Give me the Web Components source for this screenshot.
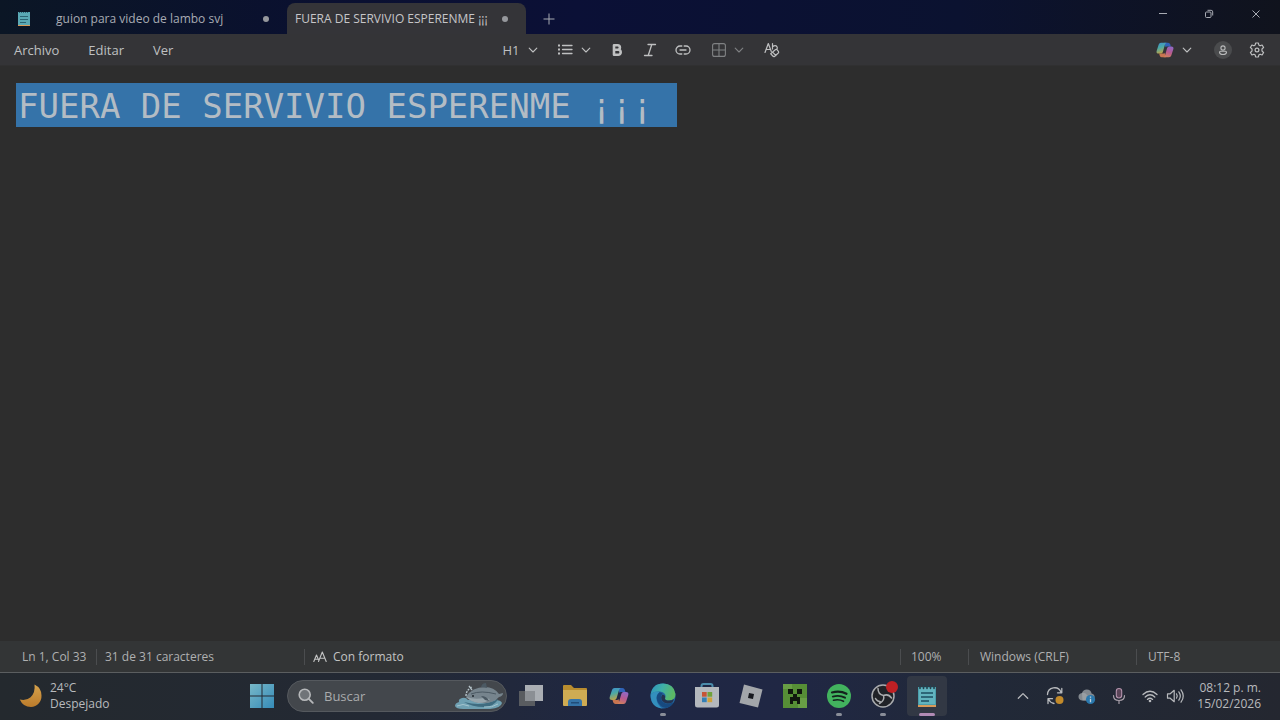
<!DOCTYPE html>
<html lang="es">
<head>
<meta charset="utf-8">
<meta name="viewport" content="width=device-width, initial-scale=1">
<title>FUERA DE SERVIVIO ESPERENME ¡¡¡</title>
<style>
  html, body { height: 100%; }
  body {
    margin: 0;
    font-family: "Open Sans", "Noto Sans", sans-serif;
    font-size: 12px;
    color: #b9babb;
    background: #2d2d2d;
    --strong: #bfc0c1;
    --muted: #7f8183;
  }
</style>
</head>
<body>
<desktop-screen></desktop-screen>
<script>
const ICONS = {
  notes: ['0 0 20 24', `<path fill="#4b9fac" d="M1 3h18v18H1z"/><path fill="#62b4bf" d="M2 4h16v16H2z"/><path fill="#d99a58" d="M1 21h18v2H1z"/><path stroke="#1d4e62" stroke-width="1.5" d="M4 9h12M4 13h12M4 17h8"/><path stroke="#24404d" stroke-width="1.6" stroke-linecap="round" d="M3 1.5v3M6.5 1.5v3M10 1.5v3M13.500 1.5v3M17 1.5v3"/>`],
  notesSmall: ['0 0 14 16', `<path fill="#5aa9b5" d="M1 1h12v13H1z"/><path fill="#d99a58" d="M1 14h12v1H1z"/><path stroke="#2c6472" d="M3 5.500h8M3 8.500h8M3 11.500h6"/><path stroke="#2c6472" stroke-dasharray="1 1" d="M2 1.500h10"/>`],
  plus: ['0 0 12 12', `<path stroke="currentColor" d="M6 .5v11M.5 6h11"/>`],
  min: ['0 0 10 10', `<path stroke="currentColor" d="M1 4.500h8"/>`],
  restore: ['0 0 10 10', `<rect x="1.500" y="3" width="5.500" height="5.500" rx="1" fill="none" stroke="currentColor"/><path fill="none" stroke="currentColor" d="M3.500 1.300h3.600q1.600 0 1.600 1.600v3.600"/>`],
  close: ['0 0 10 10', `<path stroke="currentColor" d="M1.500 1.500l7 7M8.500 1.500l-7 7"/>`],
  chev: ['0 0 10 10', `<path fill="none" stroke="currentColor" stroke-width="1.100" stroke-linecap="round" stroke-linejoin="round" d="M1.200 3.200L5 7l3.800-3.800"/>`],
  up: ['0 0 12 12', `<path fill="none" stroke="currentColor" stroke-width="1.300" stroke-linecap="round" stroke-linejoin="round" d="M1.300 8.300L6 3.600l4.700 4.700"/>`],
  list: ['0 0 16 16', `<path stroke="currentColor" stroke-width="1.300" stroke-linecap="round" d="M5.500 3.500h9.500M5.500 7.500h9.500M5.500 11.500h9.500"/><path fill="currentColor" d="M1 2.500h2v2H1zM1 6.500h2v2H1zM1 10.500h2v2H1z"/>`],
  bold: ['0 0 12 14', `<path fill="none" stroke="currentColor" stroke-width="2.600" stroke-linejoin="round" d="M3 2.200h3.600a2.300 2.300 0 0 1 0 4.600H3zM3 6.800h4.200a2.500 2.500 0 0 1 0 5H3z"/>`],
  italic: ['0 0 14 14', `<path fill="none" stroke="currentColor" stroke-width="1.300" stroke-linecap="round" d="M5 1.500h7.500M1.500 12.500H9M8.800 1.500l-3.600 11"/>`],
  link: ['0 0 16 12', `<path fill="none" stroke="currentColor" stroke-width="1.300" stroke-linecap="round" d="M6.800 2H5a4 4 0 0 0 0 8h1.800M9.200 2H11a4 4 0 0 1 0 8H9.200M5 6h6"/>`],
  table: ['0 0 14 14', `<rect x=".6" y=".6" width="12.800" height="12.800" rx="2" fill="none" stroke="currentColor" stroke-width="1.100"/><path stroke="currentColor" stroke-width="1.100" d="M7 1v12M1 7h12"/>`],
  clear: ['0 0 16 16', `<path fill="none" stroke="currentColor" stroke-width="1.200" stroke-linecap="round" stroke-linejoin="round" d="M1 10.500L4.300 1.500l3 8M2.200 7.500h4M8.500 1.500v5.500M8.500 4.800q3-2.200 4.500 0q.7 1.200 0 2.200M6.700 11.800l4.600-4q1-.8 1.900.1l1.200 1.400q.7.900-.1 1.700l-3.600 3.200q-1 .8-1.900-.2l-2-2.200M8.600 10.100l3.300 3.500"/>`],
  person: ['0 0 18 18', `<circle cx="9" cy="9" r="9" fill="#4a4b4d"/><circle cx="9" cy="7" r="2.100" fill="none" stroke="#b9babb" stroke-width="1.100"/><path fill="none" stroke="#b9babb" stroke-width="1.100" d="M6.500 10.300h5q1 0 1 1q-.4 2.200-3.500 2.200t-3.500-2.200q0-1 1-1z"/>`],
  gear: ['0 0 16 16', `<path fill="none" stroke="currentColor" stroke-width="1.200" stroke-linejoin="round" d="M6.600 1h2.800l.4 2 1.300.8 2-.8 1.500 2.500-1.600 1.400v2.200l1.600 1.400-1.500 2.500-2-.8-1.300.8-.4 2H6.600l-.4-2-1.300-.8-2 .8-1.500-2.500L3 9.100V6.900L1.400 5.500 2.900 3l2 .8L6.200 3z"/><circle cx="8" cy="8" r="1.900" fill="none" stroke="currentColor" stroke-width="1.200"/>`],
  copilot: ['0 0 20 20', `<defs><linearGradient id="a" x1="0" y1="0" x2=".3" y2="1"><stop offset="0" stop-color="#3d8fd0"/><stop offset=".5" stop-color="#4ba9a5"/><stop offset="1" stop-color="#b9a34c"/></linearGradient><linearGradient id="b" x1=".6" y1="0" x2=".3" y2="1"><stop offset="0" stop-color="#9068c4"/><stop offset=".5" stop-color="#b65a92"/><stop offset="1" stop-color="#d07f5c"/></linearGradient></defs><path fill="#2f62b8" d="M9 2h4.500q1.700 0 2.300 1.700L16.500 6H12q-1 0-1.400 1z"/><path fill="#c87550" d="M11 18H6.500q-1.700 0-2.300-1.700L3.500 14H8q1 0 1.400-1z"/><path fill="url(#a)" d="M5.500 2h6.300Q10.500 2.400 10 4L7.600 12.300Q7.100 14 5.400 14H3Q0 14 .7 11L3 4Q3.600 2 5.500 2z"/><path fill="url(#b)" d="M14.500 18H8.200q1.300-.4 1.800-2l2.400-8.300Q12.900 6 14.600 6H17q3 0 2.300 3L17 16q-.6 2-2.500 2z"/>`],
  format: ['0 0 14 12', `<path fill="none" stroke="currentColor" stroke-width="1.100" stroke-linecap="round" stroke-linejoin="round" d="M.8 10.500L3.500 4l2 4.800M1.800 8.300h3M5.500 10.500L9.300 1l3.900 9.500M6.800 7.300h5"/>`],
  moon: ['0 0 24 24', `<defs><linearGradient id="m" x1="0" y1="0" x2="0" y2="1"><stop offset="0" stop-color="#d6a24c"/><stop offset="1" stop-color="#bb7b2b"/></linearGradient></defs><path fill="url(#m)" d="M15.500.5q7 3.500 7 11A11 11 0 0 1 12 23Q4 23 .8 15.500q6.500 1.500 10.800-2.300Q16.500 8.500 15.500.5z"/>`],
  start: ['0 0 24 24', `<defs><linearGradient id="s" x1="0" y1="0" x2="1" y2="1"><stop offset="0" stop-color="#78b8c8"/><stop offset="1" stop-color="#358bb8"/></linearGradient></defs><path fill="url(#s)" d="M0 0h11.500v11.500H0zM12.500 0H24v11.500H12.500zM0 12.500h11.500V24H0zM12.500 12.500H24V24H12.500z"/>`],
  search: ['0 0 16 16', `<circle cx="6.700" cy="6.700" r="5.500" fill="#707478" stroke="#b6b8ba" stroke-width="1.600"/><path stroke="#b6b8ba" stroke-width="1.900" stroke-linecap="round" d="M10.800 10.800l4 4"/>`],
  whale: ['0 0 50 28', `<path fill="#6fa0b2" d="M1 24q0-3 4-4-1-3 3-4 4-1 6 2 8-3 15 1 7-6 13-4 2 2-1 3 6 0 7 3-1 5-12 6H9q-7 0-8-3z"/><path fill="#3f6c80" d="M10 20q8 2 14 2 10 0 20-5-3 7-14 8-12 0-20-5z"/><path fill="#76848d" d="M12 15Q18 5 31 5q9 0 14 7l4-1q0 3-4 4-6 7-18 6-8 0-15-6z"/><path fill="#98a6ad" d="M12 15q9 3 18 1l6 1q-4 4-11 4-8-1-13-6z"/><path fill="#4b5963" d="M27 5q1-4 5-4l1 5zM27 14q6 0 8 5l-4-1z"/><path fill="none" stroke="#4b5963" d="M17 12q10-4 25 0"/><circle cx="19" cy="14" r="1" fill="#20282f"/><path fill="none" stroke="#b4c2c8" stroke-width="1.400" stroke-dasharray="2 1" d="M12 14q0-6 6-9M18 8l-3-4"/><path fill="none" stroke="#a4c4ce" d="M3 24q6-3 12 0M30 25q8 1 14-3"/>`],
  tasks: ['0 0 26 26', `<path fill="#595c60" d="M1 8h16v15H1z"/><path fill="#aaaeb3" d="M7 2h18v16H7z"/><path fill="#8b8f94" d="M7 8h10v10H7z"/>`],
  folder: ['0 0 26 26', `<path fill="#b98d2f" d="M1 3q0-1 1-1h7l3 3h12q1 0 1 1v8H1z"/><path fill="#cfac53" d="M1 7h24v15q0 1-1 1H2q-1 0-1-1z"/><path fill="#3574a8" d="M6 23v-4q0-3 3-3h8q3 0 3 3v4z"/><path fill="#214d79" d="M9 19h8v1.500H9z"/>`],
  edge: ['0 0 26 26', `<defs><linearGradient id="e" x1="0" y1="0" x2="1" y2=".3"><stop offset="0" stop-color="#2d8fc0"/><stop offset=".5" stop-color="#3fb0a8"/><stop offset="1" stop-color="#5cb864"/></linearGradient></defs><circle cx="13" cy="13" r="12.500" fill="#2466a0"/><path fill="url(#e)" d="M.6 12Q2 .5 13 .5T25.500 11q0 6-6.500 6.500-4 0-4-2 1.500-2 0-4.500-2-3-6-2.500Q2 8.700.6 12z"/><path fill="#338fbd" d="M.6 12Q4 7 9.500 9q-3.300 2.500-3 7 .5 6 6 9.400Q1 24.800.6 12z"/><path fill="#174a80" d="M9.600 9.200q-4 3-2.500 8.300 2.300 6.500 9 7.600 5-1.100 7.500-5.600-9 3-12-2-1.800-3.800 1-7.200z"/><path fill="#24334f" d="M12.500 11.500q3.500.5 2.500 4 0 2 4 2 3 0 4.800-1.500-.3 2-1.500 3.500-7 2.500-10-1.500-2.300-3.700.2-6.500z"/>`],
  store: ['0 0 26 26', `<path fill="none" stroke="#4b8cab" stroke-width="2" d="M7.500 6V3q0-2 2-2h7q2 0 2 2v3"/><path fill="#b4b8bd" d="M1 4h24v18q0 2.500-2.500 2.500h-19Q1 24.500 1 22z"/><path fill="#c65437" d="M8 9h4.700v4.700H8z"/><path fill="#70a13b" d="M13.500 9h4.700v4.700h-4.700z"/><path fill="#347fb5" d="M8 14.500h4.700v4.700H8z"/><path fill="#d0a23a" d="M13.500 14.500h4.700v4.700h-4.700z"/>`],
  roblox: ['0 0 26 26', `<path fill="#a3a6aa" d="M6 1.500L24.500 6.500 20 24.500 1.500 20z"/><path fill="#17191f" d="M11 10l5 1-1 5-5-1z"/>`],
  creeper: ['0 0 24 24', `<path fill="#568f36" d="M0 0h24v24H0z"/><path fill="#689e45" d="M0 0h9v5H0zM15 14h9v10h-9z"/><path fill="#10170e" d="M5 5h5v5H5zM14 5h5v5h-5zM10 10h4v3h3v7h-3v-3h-4v3H7v-7h3z"/>`],
  spotify: ['0 0 24 24', `<circle cx="12" cy="12" r="12" fill="#42b35e"/><path fill="none" stroke="#14221d" stroke-linecap="round" stroke-width="2.200" d="M5 8.500q8-2.200 14.500 1.300"/><path fill="none" stroke="#14221d" stroke-linecap="round" stroke-width="1.900" d="M5.800 12.600q6.700-1.800 12.200 1.100"/><path fill="none" stroke="#14221d" stroke-linecap="round" stroke-width="1.600" d="M6.500 16.300q5.500-1.400 10 1"/>`],
  obs: ['0 0 26 28', `<circle cx="13" cy="14" r="11" fill="#202227" stroke="#a9abae" stroke-width="1.500"/><path fill="none" stroke="#a9abae" stroke-width="1.500" stroke-linecap="round" d="M8 6.500q0 6 5.500 7M13.500 13.500q5-2 8 2.500M13.500 13.500q1.500 5-4 8M5.500 16.500q1.500 3 5.500 3.500"/><circle cx="22" cy="5" r="6" fill="#bf2024"/>`],
  sync: ['0 0 18 18', `<path fill="none" stroke="currentColor" stroke-width="1.300" stroke-linecap="round" stroke-linejoin="round" d="M1.500 7.500A7 7 0 0 1 15 5.200M15.800 1.500v4.300h-4.300M2 16.500v-4.800h4.500M2.500 12.200q1.800 3.600 5.500 4.300"/><circle cx="13.500" cy="13" r="4" fill="#c28a2a"/>`],
  cloud: ['0 0 18 18', `<path fill="#83898f" d="M4.500 13.500q-4-.5-4-3.800 0-3.200 3.500-3.700Q5 2.500 8.800 2.500q4 0 4.800 4 3 .5 3 3.500t-3 3.500z"/><path fill="#a9adb1" d="M4 6q3-.8 5 2l4 5.500H4.500Z" opacity=".6"/><circle cx="12.500" cy="12.500" r="4.600" fill="#2a78ad"/><path stroke="#c3d3dd" stroke-width="1.300" d="M12.500 11.800v3.500M12.500 9.500v1.300"/>`],
  mic: ['0 0 16 18', `<rect x="5.300" y="1.500" width="5.400" height="9.500" rx="2.700" fill="#5b4559" stroke="#b493ac" stroke-width="1.100"/><path fill="none" stroke="#a9a0aa" stroke-width="1.200" stroke-linecap="round" d="M2.500 8.500q0 5 5.500 5t5.500-5M8 13.500v3"/>`],
  wifi: ['0 0 16 16', `<path fill="none" stroke="currentColor" stroke-width="1.300" stroke-linecap="round" d="M1 6.500q7-6.500 14 0M3.200 9q4.800-4.500 9.600 0M5.400 11.400q2.600-2.400 5.200 0"/><circle cx="8" cy="13" r="1.300" fill="currentColor"/>`],
  sound: ['0 0 18 16', `<path fill="none" stroke="currentColor" stroke-width="1.200" stroke-linecap="round" stroke-linejoin="round" d="M1.500 5.800h2.700l4-3.500v11.400l-4-3.500H1.500zM10.500 5.800q1.500 2.200 0 4.400M12.800 3.800q3 4.200 0 8.400M15 1.800q4.500 6.200 0 12.400"/>`]
};

function define(name, html, after) {
  const template = document.createElement('template');
  template.innerHTML = html;
  customElements.define(name, class extends HTMLElement {
    connectedCallback() {
      if (this.shadowRoot) return;
      this.attachShadow({ mode: 'open' }).append(template.content.cloneNode(true));
      if (after) after(this, this.shadowRoot);
    }
  });
}

const BUTTON = `button { font: inherit; color: inherit; background: none; border: 0; margin: 0; padding: 0; }`;

/* <app-icon name size>: one drawing from the table above */
define('app-icon', `<style>
  :host { display: inline-flex; flex: none; }
  svg { display: block; fill: none; overflow: visible; }
</style>`, (host, root) => {
  const [box, body] = ICONS[host.getAttribute('name')];
  const [, , w, h] = box.split(' ').map(Number);
  const width = Number(host.getAttribute('size') || w);
  root.innerHTML += `<svg aria-hidden="true" viewBox="${box}" width="${width}" height="${Math.round(width * h / w)}">${body}</svg>`;
});

/* <tool-button label>: flat button holding icons or text */
define('tool-button', `<style>
  :host { display: flex; width: var(--w, 32px); height: 100%; }
  ${BUTTON}
  button { flex: 1; display: flex; align-items: center; justify-content: center; gap: 8px; }
</style><button type="button"><slot></slot></button>`, (host, root) => {
  const label = host.getAttribute('label');
  if (label) root.querySelector('button').setAttribute('aria-label', label);
});

define('note-tab', `<style>
  :host { display: flex; box-sizing: border-box; }
  :host([selected]) { background: #343438; border-radius: 8px 8px 0 0; color: #c6c6c8; }
  ${BUTTON}
  button { flex: 1; display: flex; align-items: center; text-align: left; white-space: nowrap; }
</style><button type="button" role="tab"><slot name="icon"></slot><slot></slot><slot name="end"></slot></button>`,
  (host, root) => root.querySelector('button').setAttribute('aria-selected', host.hasAttribute('selected')));

define('tab-strip', `<style>
  :host { display: flex; height: 34px; background: linear-gradient(90deg, #0b1625, #0a1030 25%, #0b1036 45%, #0b1230 75%, #10131d); color: #a8abb3; }
  .tabs { display: flex; }
  note-tab { margin-top: 3px; }
  .first { width: 287px; padding: 0 18px 0 17px; }
  .second { width: 239px; padding: 0 18px 0 8px; font-weight: 500; }
  .title { flex: 1; }
  .first .title { padding-left: 25px; }
  .dot { width: 6px; height: 6px; border-radius: 50%; background: #96989d; }
  .caption { margin-left: auto; display: flex; height: 28px; }
  .add { --w: 45px; padding-top: 3px; box-sizing: border-box; }
</style>
<div class="tabs" role="tablist">
  <note-tab class="first"><app-icon slot="icon" name="notesSmall"></app-icon><span class="title">guion para video de lambo svj</span><span class="dot" slot="end"></span></note-tab>
  <note-tab class="second" selected><span class="title">FUERA DE SERVIVIO ESPERENME ¡¡¡</span><span class="dot" slot="end"></span></note-tab>
</div>
<tool-button class="add" label="Nueva pestaña"><app-icon name="plus"></app-icon></tool-button>
<div class="caption">
  <tool-button style="--w:46px" label="Minimizar"><app-icon name="min"></app-icon></tool-button>
  <tool-button style="--w:46px" label="Restaurar"><app-icon name="restore"></app-icon></tool-button>
  <tool-button style="--w:48px" label="Cerrar"><app-icon name="close"></app-icon></tool-button>
</div>`);

define('tool-bar', `<style>
  :host { display: grid; grid-template-columns: 1fr auto 1fr; height: 32px; background: #343437; color: var(--strong); border-bottom: 1px solid #303031; box-sizing: border-box; }
  nav, .format, .side { display: flex; align-items: center; }
  nav { gap: 29px; padding-left: 14px; font-size: 13px; }
  ${BUTTON}
  .side { justify-content: flex-end; padding-right: 7px; }
  .h { font-size: 13px; }
  .dim { color: var(--muted); }
  .avatar { margin: 0 2px 0 9px; }
</style>
<nav><button type="button">Archivo</button><button type="button">Editar</button><button type="button">Ver</button></nav>
<div class="format">
  <tool-button style="--w:56px"><span class="h">H1</span><app-icon name="chev"></app-icon></tool-button>
  <tool-button style="--w:52px" label="Lista"><app-icon name="list"></app-icon><app-icon name="chev"></app-icon></tool-button>
  <tool-button style="--w:34px" label="Negrita"><app-icon name="bold"></app-icon></tool-button>
  <tool-button label="Cursiva"><app-icon name="italic"></app-icon></tool-button>
  <tool-button style="--w:34px" label="Vínculo"><app-icon name="link"></app-icon></tool-button>
  <tool-button class="dim" style="--w:56px" label="Tabla"><app-icon name="table"></app-icon><app-icon name="chev"></app-icon></tool-button>
  <tool-button label="Borrar formato"><app-icon name="clear"></app-icon></tool-button>
</div>
<div class="side">
  <tool-button style="--w:48px" label="Copilot"><app-icon name="copilot" size="18"></app-icon><app-icon name="chev"></app-icon></tool-button>
  <tool-button class="avatar" label="Cuenta"><app-icon name="person"></app-icon></tool-button>
  <tool-button label="Configuración"><app-icon name="gear"></app-icon></tool-button>
</div>`);

define('note-editor', `<style>
  :host { display: block; flex: 1; background: #2d2d2d; }
  [role=textbox] { padding: 17px 16px; outline: 0; }
  h1 { margin: 0; font: 400 34px/42px "DejaVu Sans Mono", monospace; color: #b3bcc4; }
  mark { display: inline-block; color: inherit; background: #3573a9; white-space: pre; padding: 2px 4px 0 2px; }
</style>
<div role="textbox" aria-multiline="true" aria-label="Editor de texto" contenteditable="true" spellcheck="false"><h1><mark>FUERA DE SERVIVIO ESPERENME ¡¡¡ </mark></h1></div>`);

define('status-bar', `<style>
  :host { display: flex; align-items: center; height: 31px; background: #333536; color: #afb0b1; border-bottom: 1px solid #5b5e60; white-space: nowrap; }
  span { box-sizing: border-box; display: flex; align-items: center; gap: 6px; height: 16px; line-height: 16px; padding-left: 8px; border-left: 1px solid #4b4d4f; }
  .pos { width: 96px; padding-left: 22px; border: 0; }
  .count { width: 208px; }
  .mode { flex: 1; color: #c2c3c3; }
  .zoom { width: 68px; padding-left: 10px; }
  .eol { width: 168px; padding-left: 11px; }
  .enc { width: 144px; padding-left: 11px; }
</style>
<span class="pos">Ln 1, Col 33</span><span class="count">31 de 31 caracteres</span>
<span class="mode"><app-icon name="format"></app-icon>Con formato</span>
<span class="zoom">100%</span><span class="eol">Windows (CRLF)</span><span class="enc">UTF-8</span>`);

/* <task-button label [running] [active]> */
define('task-button', `<style>
  :host { display: flex; width: 44px; height: 46px; padding: 3px 2px; box-sizing: border-box; }
  ${BUTTON}
  button { position: relative; flex: 1; display: flex; align-items: center; justify-content: center; border-radius: 4px; }
  :host([active]) button { background: #323844; }
  i { display: none; position: absolute; bottom: 0; left: 50%; width: 6px; height: 3px; margin-left: -3px; border-radius: 2px; background: #8a8e99; }
  :host([running]) i { display: block; }
  :host([active]) i { width: 16px; margin-left: -8px; background: #b18bb5; }
</style><button type="button"><slot></slot><i></i></button>`,
  (host, root) => root.querySelector('button').setAttribute('aria-label', host.getAttribute('label')));

define('search-box', `<style>
  :host { display: flex; width: 220px; margin: 0 2px 0 3px; }
  label { flex: 1; min-width: 0; display: flex; align-items: center; height: 32px; box-sizing: border-box; padding: 0 2px 0 10px; border: 1px solid #55595e; border-radius: 16px; background: #43474c; }
  input { flex: 1; width: 0; min-width: 0; border: 0; outline: 0; padding: 0 0 0 10px; background: none; font: inherit; font-size: 13px; color: #b5b7b9; }
  input::placeholder { color: #a9abad; opacity: 1; }
</style><label><app-icon name="search"></app-icon><input type="text" placeholder="Buscar" aria-label="Buscar"><app-icon name="whale"></app-icon></label>`);

define('task-bar', `<style>
  :host { display: flex; align-items: center; height: 46px; padding-bottom: 1px; background: linear-gradient(90deg, #24292e, #232934 30%, #1f2744 50%, #202744 62%, #212938 76%, #242730); color: #b8babd; }
  ${BUTTON}
  .weather { width: 240px; box-sizing: border-box; padding-left: 19px; display: flex; align-items: center; gap: 7px; text-align: left; line-height: 16px; }
  .apps, .tray { display: flex; align-items: center; }
  .tray { margin-left: auto; height: 46px; }
  .clock { width: 70px; margin-right: 19px; text-align: right; line-height: 16px; white-space: nowrap; }
</style>
<button class="weather" type="button"><app-icon name="moon"></app-icon><span>24°C<br>Despejado</span></button>
<div class="apps">
  <task-button label="Inicio"><app-icon name="start"></app-icon></task-button>
  <search-box></search-box>
  <task-button label="Vista de tareas"><app-icon name="tasks"></app-icon></task-button>
  <task-button label="Explorador de archivos"><app-icon name="folder"></app-icon></task-button>
  <task-button label="Copilot"><app-icon name="copilot"></app-icon></task-button>
  <task-button label="Microsoft Edge" running><app-icon name="edge"></app-icon></task-button>
  <task-button label="Microsoft Store"><app-icon name="store"></app-icon></task-button>
  <task-button label="Roblox"><app-icon name="roblox"></app-icon></task-button>
  <task-button label="Minecraft"><app-icon name="creeper"></app-icon></task-button>
  <task-button label="Spotify" running><app-icon name="spotify"></app-icon></task-button>
  <task-button label="OBS Studio" running><app-icon name="obs"></app-icon></task-button>
  <task-button label="Bloc de notas" running active><app-icon name="notes"></app-icon></task-button>
</div>
<div class="tray">
  <tool-button label="Iconos ocultos"><app-icon name="up"></app-icon></tool-button>
  <tool-button label="Windows Update"><app-icon name="sync"></app-icon></tool-button>
  <tool-button label="OneDrive"><app-icon name="cloud"></app-icon></tool-button>
  <tool-button label="Micrófono"><app-icon name="mic"></app-icon></tool-button>
  <tool-button style="--w:56px" label="Red y volumen"><app-icon name="wifi"></app-icon><app-icon name="sound"></app-icon></tool-button>
  <button class="clock" type="button">08:12 p. m.<br>15/02/2026</button>
</div>`);

define('desktop-screen', `<style>
  :host { display: flex; flex-direction: column; min-height: 100%; }
</style>
<tab-strip></tab-strip><tool-bar></tool-bar><note-editor></note-editor><status-bar></status-bar><task-bar></task-bar>`);
</script>
</body>
</html>
